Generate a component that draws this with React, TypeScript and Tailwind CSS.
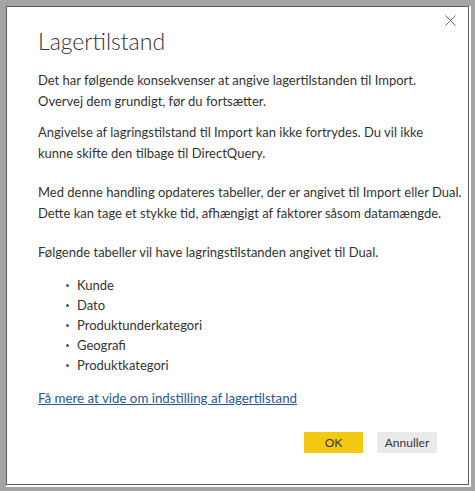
import React from "react";

const tables = ["Kunde", "Dato", "Produktunderkategori", "Geografi", "Produktkategori"];

const App: React.FC = () => {
  return (
    <div
      className="w-[475px] h-[491px] bg-[#a4a4a4] pt-[6px] pl-[6px]"
      style={{ fontFamily: 'Lato, "Open Sans", sans-serif' }}
    >
      <div className="relative w-[463px] h-[479px] bg-white border border-[#5c5c5c] shadow-[1px_1px_0_1px_#ffffff] px-[31px] pt-[18px] text-[#333333] whitespace-nowrap">
        <button className="absolute top-[3px] right-[8px] w-[20px] h-[20px] flex items-center justify-center text-[#6a6a6a]">
          <svg width="11" height="11" viewBox="0 0 11 11" fill="none" stroke="currentColor" strokeWidth="1">
            <path d="M0.5 0.5L10.5 10.5M10.5 0.5L0.5 10.5" />
          </svg>
        </button>
        <h1 className="text-[23px] leading-[32px] font-light text-[#333333]">Lagertilstand</h1>
        <p className="mt-[13px] text-[13px] leading-[21px]">
          Det har følgende konsekvenser at angive lagertilstanden til Import.
          <br />
          Overvej dem grundigt, før du fortsætter.
        </p>
        <p className="mt-[10px] text-[13px] leading-[21px]">
          Angivelse af lagringstilstand til Import kan ikke fortrydes. Du vil ikke
          <br />
          kunne skifte den tilbage til DirectQuery.
        </p>
        <p className="mt-[18px] text-[13px] leading-[21px]">
          Med denne handling opdateres tabeller, der er angivet til Import eller Dual.
          <br />
          Dette kan tage et stykke tid, afhængigt af faktorer såsom datamængde.
        </p>
        <p className="mt-[18px] text-[13px] leading-[21px]">
          Følgende tabeller vil have lagringstilstanden angivet til Dual.
        </p>
        <ul className="mt-[12px] pl-[28px] text-[13px] leading-[20px]">
          {tables.map((t) => (
            <li key={t} className="flex items-center">
              <span className="w-[3px] h-[3px] rounded-full bg-[#555555] mr-[8px] mt-[1px]" />
              {t}
            </li>
          ))}
        </ul>
        <a href="#" className="inline-block mt-[13px] text-[13.3px] leading-[21px] text-[#2a579a] underline">
          Få mere at vide om indstilling af lagertilstand
        </a>
        <div className="mt-[23px] flex justify-end gap-[14px]">
          <button className="w-[59px] h-[21px] bg-[#f2c811] text-[12px] text-[#333333]">OK</button>
          <button className="w-[60px] h-[21px] bg-[#eaeaea] text-[12px] text-[#333333]">Annuller</button>
        </div>
      </div>
    </div>
  );
};

export default App;
